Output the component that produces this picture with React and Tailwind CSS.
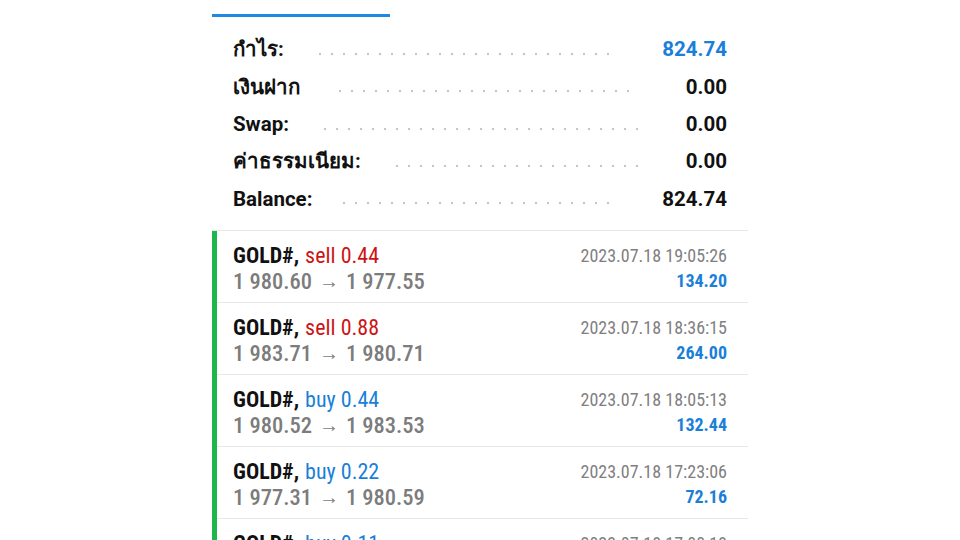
import React from "react";

const summary = [
  { label: "กำไร:", value: "824.74", blue: true, dl: "ml-[30px]", dr: "mr-[52px]" },
  { label: "เงินฝาก", value: "0.00", dl: "ml-[34px]", dr: "mr-[48px]" },
  { label: "Swap:", value: "0.00", dl: "ml-[30px]", dr: "mr-[48px]" },
  { label: "ค่าธรรมเนียม:", value: "0.00", dl: "ml-[30px]", dr: "mr-[48px]" },
  { label: "Balance:", value: "824.74", dl: "ml-[26px]", dr: "mr-[52px]" },
];

const trades = [
  { side: "sell", lot: "0.44", from: "1 980.60", to: "1 977.55", date: "2023.07.18 19:05:26", profit: "134.20" },
  { side: "sell", lot: "0.88", from: "1 983.71", to: "1 980.71", date: "2023.07.18 18:36:15", profit: "264.00" },
  { side: "buy", lot: "0.44", from: "1 980.52", to: "1 983.53", date: "2023.07.18 18:05:13", profit: "132.44" },
  { side: "buy", lot: "0.22", from: "1 977.31", to: "1 980.59", date: "2023.07.18 17:23:06", profit: "72.16" },
  { side: "buy", lot: "0.11", from: "1 976.10", to: "1 977.52", date: "2023.07.18 17:00:18", profit: "15.62" },
];

const F = "font-['Roboto','Noto_Sans',sans-serif]";
const FC = "font-['Roboto_Condensed','Roboto','Noto_Sans',sans-serif] font-stretch-condensed";

export default function App() {
  return (
    <div className={`w-[960px] h-[540px] overflow-hidden bg-white ${F}`}>
      <div className="w-[536px] ml-[212px]">
        <div className="h-[14px]" />
        <div className="h-[3px] w-[178px] bg-[#1e88e5]" />
        <div className="pt-[14px] pb-[13px] px-[21px]">
          {summary.map((r) => (
            <div key={r.label} className="h-[37.3px] flex items-center">
              <span className="text-[20.5px] font-bold text-[#111] leading-none">{r.label}</span>
              <div
                className={`flex-1 h-[4px] self-center mt-[9px] ${r.dl} ${r.dr} bg-[radial-gradient(circle,#c6c6c6_1.1px,transparent_1.6px)] bg-[length:12px_4px] bg-repeat-x`}
              />
              <span
                className={`text-[20.5px] font-bold leading-none ${r.blue ? "text-[#1a7fd8]" : "text-[#111]"}`}
              >
                {r.value}
              </span>
            </div>
          ))}
        </div>
        <div className="h-px bg-[#e8e8e8]" />
        <div className="border-l-[5px] border-[#1cb64a]">
          {trades.map((t, i) => (
            <div key={i} className={i > 0 ? "border-t border-[#e8e8e8]" : ""}>
              <div className={`pl-[16px] pr-[21px] pt-[12px] pb-[9px] flex justify-between ${FC}`}>
                <div className="flex flex-col">
                  <div className="h-[25px] flex items-center text-[22px] leading-none">
                    <span className="font-bold text-[#111]">GOLD#,</span>
                    <span className={`ml-[6px] ${t.side === "sell" ? "text-[#cc1414]" : "text-[#1a7fd8]"}`}>
                      {t.side} {t.lot}
                    </span>
                  </div>
                  <div className="h-[25px] flex items-center text-[22.5px] leading-none font-medium text-[#7c7c7c]">
                    {t.from}
                    <span className="mx-[7px] text-[20px] font-normal">→</span>
                    {t.to}
                  </div>
                </div>
                <div className="flex flex-col items-end">
                  <div className="h-[25px] flex items-center text-[18px] leading-none text-[#7f7f7f] pt-[1px]">
                    {t.date}
                  </div>
                  <div className="h-[25px] flex items-center text-[18px] leading-none font-bold text-[#1a7fd8]">
                    {t.profit}
                  </div>
                </div>
              </div>
            </div>
          ))}
        </div>
      </div>
    </div>
  );
}
